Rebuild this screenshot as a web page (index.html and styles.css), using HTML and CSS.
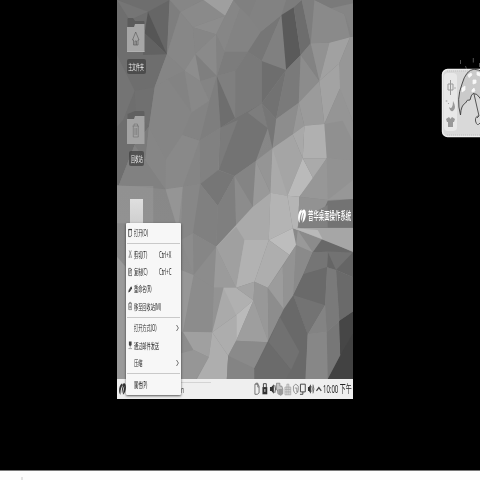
FILE: index.html
```html
<!DOCTYPE html>
<html lang="zh-CN">
<head>
<meta charset="utf-8">
<title>普华桌面操作系统</title>
<link rel="stylesheet" href="styles.css">
</head>
<body>
<main class="desktop">
  <section class="workspace">
    <svg class="wallpaper" viewBox="22 0 709 1137" preserveAspectRatio="none">
      <defs><linearGradient id="shade" x1="0" y1="0" x2="0" y2="1"><stop offset="0" stop-color="#828282"/><stop offset="1" stop-color="#8e8e8e"/></linearGradient></defs>
      <rect x="22" width="709" height="1137" fill="url(#shade)"/>
      <path fill="#6e6e6e" d="M22 0H180L172 163 135 262 118 380 75 435 28 555H22Z"/>
      <path fill="#666" d="M115 35 180 0 172 163Z"/><path fill="#757575" d="M22 0 115 35 60 60Z"/>
      <path fill="#565656" d="M115 35 172 163 105 100Z"/><path fill="#626262" d="M105 100 172 163 100 165Z"/>
      <path fill="#747474" d="M22 165 75 272 40 360 22 380Z"/><path fill="#707070" d="M75 272 135 262 118 380 78 335Z"/>
      <path fill="#7a7a7a" d="M75 435 118 380 108 475 28 555Z"/><path fill="#818181" d="M75 435 168 568 28 555Z"/>
      <path fill="#868686" d="M180 0H282L212 36Z"/><path fill="#7e7e7e" d="M180 0 212 36 172 163Z"/>
      <path fill="#8a8a8a" d="M212 36 282 0 347 47 250 82Z"/><path fill="#878787" d="M212 36 250 82 257 162 225 212 172 163Z"/>
      <path fill="#9f9f9f" d="M282 0H372L347 47Z"/><path fill="#8d8d8d" d="M250 82 347 47 320 103Z"/>
      <path fill="#868686" d="M250 82 320 103 257 162Z"/><path fill="#8a8a8a" d="M320 103 322 228 257 162Z"/>
      <path fill="#7f7f7f" d="M257 162 322 228 272 244Z"/><path fill="#8d8d8d" d="M257 162 272 244 225 212Z"/>
      <path fill="#858585" d="M172 163 225 212 175 237 135 262Z"/><path fill="#838383" d="M175 237 225 212 246 338Z"/>
      <path fill="#888" d="M225 212 272 244 300 302 246 338Z"/><path fill="#848484" d="M272 244 322 228 300 302Z"/>
      <path fill="#858585" d="M175 237 246 338 218 405 168 480 118 380 135 262Z"/>
      <path fill="#838383" d="M246 338 300 302 270 422 218 405Z"/><path fill="#7e7e7e" d="M300 302 322 228 333 383 270 422Z"/>
      <path fill="#868686" d="M347 47 372 0 392 25 345 155 320 103Z"/><path fill="#808080" d="M372 0H440L420 50 392 25Z"/>
      <path fill="#838383" d="M392 25 420 50 454 95 415 155 345 155Z"/><path fill="#7c7c7c" d="M345 155 415 155 377 213 322 228Z"/>
      <path fill="#828282" d="M320 103 345 155 322 228Z"/><path fill="#7f7f7f" d="M322 228 377 213 377 355Z"/>
      <path fill="#6e6e6e" d="M322 228 377 355 333 383Z"/><path fill="#797979" d="M415 155 457 183 457 310 377 355 377 213Z"/>
      <path fill="#767676" d="M454 95 516 45 457 183 415 155Z"/><path fill="#828282" d="M440 0H530L553 22 516 45 454 95 420 50Z"/>
      <path fill="#7c7c7c" d="M530 0H575L553 22 516 45Z"/><path fill="#808080" d="M516 45 530 210 457 183Z"/>
      <path fill="#5a5a5a" d="M516 45 553 22 574 165 530 210Z"/><path fill="#6d6d6d" d="M553 22 577 0 604 130 574 165Z"/>
      <path fill="#6e6e6e" d="M457 183 530 210 457 310Z"/><path fill="#727272" d="M457 310 530 210 500 357Z"/>
      <path fill="#7a7a7a" d="M530 210 574 165 568 308 500 357Z"/><path fill="#7e7e7e" d="M577 0H615L660 128 604 130Z"/>
      <path fill="#8a8a8a" d="M615 0 705 43 722 112 660 128 604 130Z"/><path fill="#7a7a7a" d="M615 0H731V20L665 25Z"/>
      <path fill="#858585" d="M665 25 731 10V110L705 43Z"/><path fill="#8c8c8c" d="M574 165 630 243 568 308Z"/>
      <path fill="#838383" d="M574 165 604 130 630 243Z"/><path fill="#929292" d="M604 130 660 128 630 243Z"/>
      <path fill="#a1a1a1" d="M660 128 722 112 690 190 630 243Z"/><path fill="#979797" d="M722 112 731 110V365L690 265V190Z"/>
      <path fill="#a3a3a3" d="M630 243 690 190 692 265 645 372Z"/><path fill="#9b9b9b" d="M630 243 645 372 585 377 568 308Z"/>
      <path fill="#959595" d="M692 265 731 365V480L652 475 645 372Z"/><path fill="#909090" d="M645 372 700 362 731 425V480L652 475Z"/>
      <path fill="#8d8d8d" d="M500 357 568 308 550 403 489 445Z"/><path fill="#989898" d="M568 308 585 377 550 403Z"/>
      <path fill="#737373" d="M377 355 457 310 475 385 439 483 375 528 328 510 333 383Z"/>
      <path fill="#7b7b7b" d="M333 383 385 360 328 510Z"/><path fill="#7d7d7d" d="M415 338 457 310 475 385Z"/>
      <path fill="#767676" d="M457 310 500 357 489 445 475 385Z"/><path fill="#818181" d="M270 422 333 383 326 510 272 552Z"/>
      <path fill="#898989" d="M168 480 218 405 270 422 220 560 168 568Z"/><path fill="#868686" d="M118 380 168 480 168 568 108 475Z"/>
      <path fill="#858585" d="M270 422 272 552 220 560Z"/><path fill="#767676" d="M272 552 326 510 375 528 325 618Z"/>
      <path fill="#848484" d="M375 528 439 483 430 620 325 618Z"/><path fill="#7f7f7f" d="M325 618 375 528 380 680 320 740Z"/>
      <path fill="#8c8c8c" d="M375 528 430 620 380 680Z"/><path fill="#999" d="M439 483 483 578 430 620Z"/>
      <path fill="#8d8d8d" d="M168 568 220 560 214 720Z"/><path fill="#959595" d="M168 568 220 560 205 690Z"/>
      <path fill="#878787" d="M220 560 272 552 325 618 250 700 214 720Z"/><path fill="#808080" d="M272 552 325 618 320 740 250 700Z"/>
      <path fill="#a5a5a5" d="M489 445 550 403 580 475 534 587 483 578Z"/><path fill="#959595" d="M489 445 439 483 483 578Z"/>
      <path fill="#aaa" d="M489 445 534 587 483 578Z"/><path fill="#b0b0b0" d="M585 377 645 372 652 475 580 475Z"/>
      <path fill="#a9a9a9" d="M550 403 585 377 580 475Z"/><path fill="#bababa" d="M580 475 612 536 570 590 534 587Z"/>
      <path fill="#aaa" d="M580 475 652 475 612 536Z"/><path fill="#979797" d="M652 475 731 485V597L655 600 570 590Z"/>
      <path fill="#929292" d="M652 475 655 600 731 540V480Z"/><path fill="#aaa" d="M430 620 483 578 478 720 380 863 320 740Z"/>
      <path fill="#a0a0a0" d="M320 740 380 680 405 720 380 863Z"/><path fill="#b4b4b4" d="M483 578 534 587 550 685 478 720Z"/>
      <path fill="#b5b5b5" d="M534 587 570 590 565 690 550 685Z"/><path fill="#929292" d="M570 590 655 600 655 690H565Z"/>
      <path fill="#b2b2b2" d="M405 720 478 720 435 845 380 863Z"/><path fill="#bdbdbd" d="M478 720 550 685 560 735 540 765Z"/>
      <path fill="#aeaeae" d="M478 720 540 765 475 863 435 845Z"/><path fill="#8c8c8c" d="M214 720 250 700 320 740 313 863 252 825Z"/>
      <path fill="#868686" d="M252 825 320 740 250 700Z"/><path fill="#9b9b9b" d="M320 740 380 863 342 863 313 863Z"/>
      <path fill="#8c8c8c" d="M252 825 313 863 308 997 220 995Z"/><path fill="#979797" d="M214 810 252 825 220 995H214Z"/>
      <path fill="#939393" d="M313 863H342L308 997Z"/><path fill="#aaa" d="M342 863 380 863 380 945 308 997Z"/>
      <path fill="#b0b0b0" d="M342 863H380L432 901 380 945Z"/><path fill="#a4a4a4" d="M380 863 435 845 432 901Z"/>
      <path fill="#bababa" d="M432 901 380 1022 380 945Z"/><path fill="#adadad" d="M308 997 380 945 380 1022 356 1067Z"/>
      <path fill="#989898" d="M435 845 475 863 477 1027 432 901Z"/><path fill="#9e9e9e" d="M432 901 477 1027 380 1022Z"/>
      <path fill="#8d8d8d" d="M475 863 523 927 477 1027Z"/><path fill="#9c9c9c" d="M475 863 520 798 523 927Z"/>
      <path fill="#a0a0a0" d="M220 995 308 997 298 1072 252 1050Z"/><path fill="#969696" d="M214 1060 252 1050 298 1072 260 1137H214Z"/>
      <path fill="#aeaeae" d="M308 997 356 1067 352 1137H262L298 1072Z"/><path fill="#8a8a8a" d="M356 1067 380 1022 477 1027 435 1105V1137H352Z"/>
      <path fill="#848484" d="M356 1067 435 1105V1137H352Z"/><path fill="#939393" d="M520 798 560 735 552 885 523 927Z"/>
      <path fill="#8a8a8a" d="M560 735 610 757 582 823 552 885Z"/><path fill="#999" d="M560 735 565 690 610 705V757Z"/>
      <path fill="#8b8b8b" d="M565 690 640 715 610 757Z"/><path fill="#6d6d6d" d="M582 823 610 757 653 802 647 915 595 1003 552 885Z"/>
      <path fill="#757575" d="M610 757 655 755 653 802 582 823Z"/><path fill="#696969" d="M523 927 552 885 595 1003 590 1137H435V1105Z"/>
      <path fill="#717171" d="M511 950 570 1055 545 1110 477 1027Z"/><path fill="#6b6b6b" d="M477 1027 545 1110 530 1137H435V1105Z"/>
      <path fill="#737373" d="M552 885 647 915 595 1003Z"/><path fill="#6a6a6a" d="M582 823 653 802 647 915 552 885Z"/>
      <path fill="#838383" d="M647 915 652 995 595 1003Z"/><path fill="#7a7a7a" d="M653 802 680 810 690 963 652 995 647 915Z"/>
      <path fill="#6a6a6a" d="M680 810 731 832V935L690 963Z"/><path fill="#656565" d="M655 755 731 757V832L680 810 653 802Z"/>
      <path fill="#727272" d="M680 810 731 757 655 755Z"/><path fill="#686868" d="M610 757 640 715 731 757 655 755Z"/>
      <path fill="#878787" d="M595 1003 652 995 655 1137H588Z"/><path fill="#777" d="M652 995 690 963 693 1065 655 1137Z"/>
      <path fill="#424242" d="M690 963 731 935V1137H655L693 1065Z"/><path fill="#464646" d="M690 963 731 935V1000L693 1065Z"/>
      <path fill="#737373" d="M655 603 731 597V683H570V660L630 657Z"/><path fill="#808080" d="M570 660 655 615V683H565Z"/>
      <path fill="#a6a6a6" d="M550 684H731V755L625 713Z"/><path fill="#b9b9b9" d="M550 684 625 690 640 718Z"/>
      <path fill="#9a9a9a" d="M22 770 48 800V1137H22Z"/><path fill="#a0a0a0" d="M22 558H131V670H22Z" opacity=".4"/>
    </svg>
    <div class="shortcuts">
      <div class="shortcut">
        <svg class="folder" viewBox="0 0 18 35"><path d="M.5 1Q.5 0 1.5 0H6L8 3H16.500Q17.500 3 17.500 4V12H.5Z" fill="#5b5b5b"/><path d="M0 9H7L8 6H17.500V34H0Z" fill="#a6a6a6"/><path d="M0 33.500H17.500" stroke="#bbb" stroke-width=".6"/><path d="M5.500 22 8.700 14 12 22H11V27H6.500V22ZM8 27V23H9.500V27" fill="none" stroke="#555" stroke-width=".6"/></svg>
        <span class="caption"><b>主文件夹</b></span>
      </div>
      <div class="shortcut">
        <svg class="folder" viewBox="0 0 18 35"><path d="M.5 4 8 1H16.500Q17.500 1 17.500 3V12H.5Z" fill="#606060"/><path d="M0 9H7L8 6H17.500V34H0Z" fill="#a3a3a3"/><path d="M5.500 16H12M7 16V14H10.500V16M6.300 16V27H11.300V16M8 18V25M9.700 18V25" fill="none" stroke="#6b6b6b" stroke-width=".55"/></svg>
        <span class="caption short"><b>回收站</b></span>
      </div>
      <div class="document"></div>
    </div>
    <div class="brand">
      <svg viewBox="0 0 9 16"><path d="M4 .5C-.5 3-1 13 2 15.500 1.500 10 3 5 5 3 4 7 3 11 4 14 5 10 5 6 7 4 6 8 5.500 12 5 15.500 9 13 10 3 7.500 1 6 0 5 1.500 4 3Z" fill="#fff"/></svg>
      <span>普华桌面操作系统</span>
    </div>
  </section>
  <footer class="taskbar">
    <svg class="start" viewBox="0 0 9 16"><path d="M4 .5C-.5 3-1 13 2 15.500 1.500 10 3 5 5 3 4 7 3 11 4 14 5 10 5 6 7 4 6 8 5.500 12 5 15.500 9 13 10 3 7.500 1 6 0 5 1.500 4 3Z" fill="#333"/></svg>
    <div class="task"><span>n</span></div>
    <div class="tray">
      <svg viewBox="0 0 8 14"><path d="M2 2H5L6.300 4V11L4.500 12.500H2ZM3 2V1H5V5H6" fill="none" stroke="#666" stroke-width=".9"/></svg>
      <svg viewBox="0 0 8 14"><path d="M2.500 5V1.500H5.500V5" fill="none" stroke="#444"/><path d="M1.500 5H6.500V12.500H1.500Z" fill="#333"/><path d="M4 7V10" stroke="#ddd"/></svg>
      <svg viewBox="0 0 8 14"><path d="M1 5H2.500L5 2V12L2.500 9H1Z" fill="#333"/><path d="M6 3Q7.500 7 6 11" fill="none" stroke="#555"/></svg>
      <svg viewBox="0 0 8 14"><path d="M.5 1H4V4H6L7 7V12L5 13.500 2 12 1.500 8H.5Z" fill="#c5c5c5" stroke="#777" stroke-width=".7"/><path d="M2.500 7H7V12L5 13.500 2.500 12Z" fill="#999"/></svg>
      <svg viewBox="0 0 8 14"><path d="M1 5H7V13H1ZM3 5V2H5V5M1 7.500H7M1 10H7M3 5V13M5 5V13" fill="#ddd" stroke="#a5a5a5" stroke-width=".8"/></svg>
      <svg viewBox="0 0 8 14"><path d="M1.500 4 4 2 6.500 4V8Q6 11 4 12 2 11 1.500 8ZM3 6H5V10H6.500" fill="none" stroke="#888" stroke-width=".9"/></svg>
      <svg viewBox="0 0 8 14"><path d="M1.500 2H6.500V10H1.500ZM1 12.500H4V10" fill="none" stroke="#444" stroke-width="1"/></svg>
      <svg viewBox="0 0 8 14"><path d="M1 5H2L4 2V12L2 9H1Z" fill="#333"/><path d="M5 4Q6 7 5 10M6.200 2.500Q8 7 6.200 11.500" fill="none" stroke="#444" stroke-width=".8"/></svg>
      <svg viewBox="0 0 8 14"><path d="M1.500 9 4 5.500 6.500 9" fill="none" stroke="#444" stroke-width="1.200"/></svg>
    </div>
    <time>10:00 下午</time>
  </footer>
  <nav class="menu">
    <div class="item"><svg viewBox="0 0 5 10"><path d="M.7 1H4.300V7L3 9H.7Z" fill="none" stroke="#333" stroke-width=".8"/><path d="M.5 1.300H4.500" stroke="#222"/></svg><span>打开(O)</span></div>
    <hr>
    <div class="item"><svg viewBox="0 0 5 10"><path d="M1.300 1 3.500 7M3.700 1 1.500 7M.5 8.500H2M3 8.500H4.700M1.500 7V9M3.500 7V9" fill="none" stroke="#666" stroke-width=".65"/></svg><span>剪切(T)</span><kbd>Ctrl+X</kbd></div>
    <div class="item"><svg viewBox="0 0 5 10"><path d="M.8 1H3L4.400 3V9H.8ZM2.300 7V3H4" fill="none" stroke="#333" stroke-width=".75"/></svg><span>复制(C)</span><kbd>Ctrl+C</kbd></div>
    <div class="item"><svg viewBox="0 0 5 10"><path d="M.3 9 .8 6 3.500 2 4.800 4 2 8Z" fill="#333"/><path d="M1.500 6.500 3 4.500" stroke="#bbb" stroke-width=".5"/></svg><span>重命名(R)</span></div>
    <div class="item"><svg viewBox="0 0 5 10"><path d="M.3 2.500H4.700M1.700 2.500V1H3.300V2.500M.8 2.500V9H4.200V2.500M2 4.500V7.500M3 4.500V7.500" fill="none" stroke="#444" stroke-width=".6"/></svg><span>移至回收站(M)</span></div>
    <hr>
    <div class="item"><i></i><span>打开方式(O)</span><svg class="more" viewBox="0 0 3 8"><path d="M.5 1 2.400 4 .5 7" fill="none" stroke="#555" stroke-width=".8"/></svg></div>
    <div class="item"><svg viewBox="0 0 5 10"><path d="M1 1H4V5L3 6H2L1 5Z" fill="#444"/><path d="M2.500 5V8M.5 9H4.500" stroke="#777" stroke-width=".7"/></svg><span>通过邮件发送</span></div>
    <div class="item"><i></i><span>压缩</span><svg class="more" viewBox="0 0 3 8"><path d="M.5 1 2.400 4 .5 7" fill="none" stroke="#555" stroke-width=".8"/></svg></div>
    <hr>
    <div class="item"><i></i><span>属性(P)</span></div>
  </nav>
</main>
<aside class="ime">
  <svg viewBox="0 0 40 84">
    <rect x="2.500" y="13.500" width="50" height="67" rx="5" fill="#d9d9d9" stroke="#eee" stroke-width="1.400"/>
    <path d="M7 15H40M7 79H40" stroke="#aaa" stroke-width=".5" stroke-dasharray="1 1"/>
    <rect x="4" y="17" width="13" height="58" rx="4" fill="#e8e8e8"/>
    <path d="M8 28H13V34H8ZM10.500 24V39" fill="none" stroke="#999" stroke-width="1"/><path d="M15 31V33" stroke="#999" stroke-width=".7"/>
    <path d="M13 45Q17 52 13 55 10 56 9 51 11 53 12 51 13 49 13 45Z" fill="#999"/><circle cx="6.500" cy="45" r="1" fill="#bbb"/><circle cx="8.500" cy="47.500" r=".6" fill="#999"/>
    <path d="M6 63 9 61 10.500 63 12 61 15 63 14 66H13V71H8V66H7Z" fill="#999"/>
    <path d="M20.500 59Q16 43 22 28 26 14 34 13.200 38 13 44 17V48Q41 45 40 42 37 37 33 37.500 31 39 30 44 27 43 25.500 47 21 49 20.500 59Z" fill="#cacaca" stroke="#3c3c3c" stroke-width=".9"/>
    <path d="M28 19 31 17 32 19 29 21.500ZM33 24 36 24 36 27 33 28ZM22 32 25 30 25 34 22 36ZM32 34 34 32 35 35 32 36ZM37 16 40 17V20L37 19Z" fill="#f8f8f8" stroke="#f8f8f8" stroke-width=".8" stroke-linejoin="round"/>
    <path d="M34 38 39 60Q35 60 35.500 65 37 71 40 67M37 62 39 60" fill="none" stroke="#555" stroke-width="1"/>
    <path d="M20.500 4V8M25.500 10 26.500 13M33.300 2V6.500M39.500 7V11" stroke="#777" stroke-width=".7"/>
  </svg>
</aside>
<div class="page-edge"><i></i></div>
</body>
</html>
```
FILE: styles.css
```css
* { box-sizing: border-box; }
html, body { margin: 0; width: 480px; height: 480px; overflow: hidden; background: #000; }
body {
  display: flex;
  flex-direction: column;
  justify-content: space-between;
  position: relative;
  font-family: "Noto Sans", "Noto Sans CJK SC", sans-serif;
}
svg { display: block; flex: none; }
.desktop { position: relative; width: 236px; height: 399px; margin-left: 117.4px; filter: grayscale(1); }
.workspace { position: relative; height: 379px; overflow: hidden; }
.wallpaper { position: absolute; inset: 0; width: 100%; height: 100%; }
.shortcuts { position: relative; width: 38px; padding-top: 17.500px; display: flex; flex-direction: column; align-items: center; }
.shortcut { height: 92px; display: flex; flex-direction: column; align-items: center; }
.folder { width: 18px; height: 35px; }
.caption {
  width: 19px; height: 15px; margin-top: 6px; border-radius: 2px;
  background: rgba(64, 64, 64, .72); color: #f0f0f0;
  display: flex; align-items: center; justify-content: center;
}
.caption.short { width: 15px; }
.caption b { font-size: 8.500px; font-weight: 400; line-height: 15px; white-space: nowrap; transform: scaleX(.46); }
.document { width: 13px; height: 34px; margin-top: -3px; background: linear-gradient(#dfdfdf, #c8c8c8); }
.brand { position: absolute; right: 1.500px; top: 207px; height: 18px; width: 54px; display: flex; align-items: center; gap: 2.500px; color: #fff; }
.brand svg { width: 8px; height: 16px; }
.brand span { font-size: 11.500px; font-weight: 500; line-height: 18px; white-space: nowrap; transform: scaleX(.47); transform-origin: left; }
.taskbar { height: 20px; background: #efefef; display: flex; align-items: center; overflow: hidden; padding-left: 1.200px; }
.start { width: 7px; height: 14px; }
.task { align-self: stretch; width: 30px; margin-left: 55.500px; padding-top: 3px; font-size: 8px; line-height: 14px; color: #555; }
.task::before { content: ""; display: block; height: 1px; background: #d4d4d4; }
.task span { display: block; width: 10px; transform: scaleX(.65); transform-origin: left; }
.tray { display: flex; margin-left: 42px; }
.tray svg { width: 7.730px; height: 14px; }
.taskbar time { margin-left: .5px; width: 29px; color: #222; font-size: 11.500px; line-height: 20px; white-space: nowrap; transform: scaleX(.52); transform-origin: left; }
.menu {
  position: absolute; left: 8.600px; top: 223px; width: 55px; height: 172.300px;
  padding: 1px .8px; background: #f7f7f7; border-radius: 1px;
  box-shadow: 0 1px 2.500px rgba(0, 0, 0, .65);
}
.item { height: 17.330px; display: flex; align-items: center; position: relative; padding-left: 1px; color: #222; font-size: 8.500px; }
.item svg, .item i { width: 4.500px; height: 10px; flex: none; }
.item span, .item kbd { font-family: inherit; white-space: nowrap; line-height: 17px; transform: scaleX(.49); transform-origin: left; }
.item span { width: 25px; margin-left: 1.600px; }
.item kbd { width: 14px; margin-left: .2px; transform: scaleX(.51); }
.item svg.more { width: 3px; height: 8px; margin-left: 17px; }
.menu hr { height: 1px; margin: 1.650px 0; border: 0; background: #c9c9c9; }
.ime { position: absolute; left: 440px; top: 56px; width: 40px; height: 84px; overflow: hidden; }
.ime svg { width: 40px; height: 84px; }
.page-edge { height: 10px; background: #fcfcfc; border-top: 1px solid #777; display: flex; align-items: flex-end; }
.page-edge i { width: 2px; height: 3px; margin-left: 21px; background: #e3e3e3; }
```
